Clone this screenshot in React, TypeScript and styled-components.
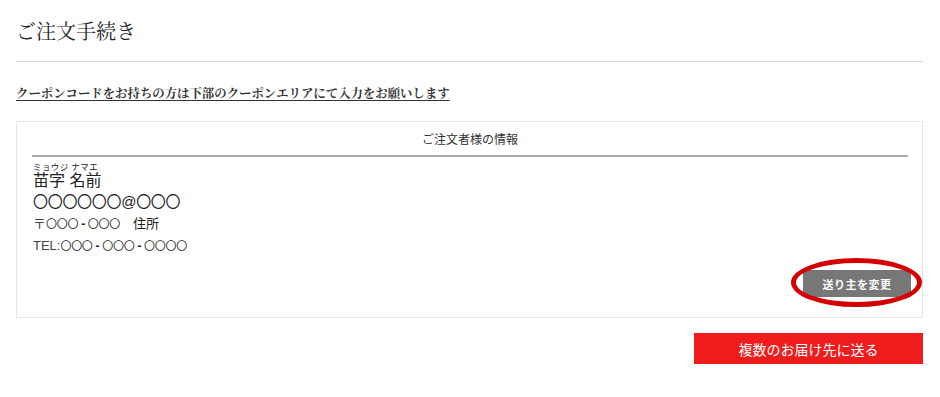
import styled, { createGlobalStyle } from "styled-components";

const GlobalStyle = createGlobalStyle`
  html, body {
    margin: 0;
    padding: 0;
    background: #fff;
  }
  body {
    font-family: "Liberation Sans", "Noto Sans CJK JP", sans-serif;
    color: #222;
  }
`;

const Page = styled.div`
  width: 940px;
  height: 397px;
  box-sizing: border-box;
  padding: 0 17px 0 16px;
`;

const Title = styled.h1`
  margin: 0;
  padding: 16px 0 16px;
  font-family: "Noto Serif CJK JP", "Liberation Serif", "Noto Sans CJK JP", serif;
  font-size: 20px;
  font-weight: 400;
  line-height: 29px;
  color: #222;
  border-bottom: 1px solid #d6d6d6;
`;

const CouponNote = styled.p`
  margin: 22px 0 19px;
  font-family: "Noto Serif CJK JP", "Liberation Serif", "Noto Sans CJK JP", serif;
  font-size: 12.4px;
  font-weight: 700;
  line-height: 18px;
  color: #333;
  text-decoration: underline;
  text-underline-offset: 2px;
`;

const Card = styled.section`
  border: 1px solid #e6e6e6;
  padding: 8px 14px 20px 15px;
`;

const CardHeading = styled.h2`
  margin: 0;
  padding-bottom: 5px;
  text-align: center;
  font-size: 12px;
  font-weight: 400;
  line-height: 20px;
  color: #333;
  border-bottom: 2px solid #aaa;
`;

const Info = styled.div`
  padding: 5px 0 0 1px;
  display: flex;
  flex-direction: column;
`;

const Name = styled.ruby`
  font-size: 16px;
  line-height: 20px;
  ruby-position: over;
  align-self: flex-start;

  rt {
    font-size: 8.5px;
    line-height: 9px;
    letter-spacing: 0.4px;
    text-align: left;
  }
`;

const Line = styled.div<{ $size: number }>`
  font-size: ${(p) => p.$size}px;
  line-height: 21px;
  color: #222;
`;

const Email = styled(Line)`
  letter-spacing: -0.3px;
  line-height: 22px;
`;

const Label = styled.span`
  color: #444;
`;

const Digits = styled.span`
  font-size: 11px;
  letter-spacing: -0.3px;
`;

const Dash = styled.span`
  display: inline-block;
  margin: 0 3px 0 3px;
  font-size: 12px;
  font-weight: 700;
`;

const Actions = styled.div`
  display: flex;
  justify-content: flex-end;
  margin-top: 13px;
`;

const Highlight = styled.div`
  position: relative;
  margin-right: -3px;
`;

const Ring = styled.div`
  position: absolute;
  left: -12px;
  right: -11px;
  top: -12px;
  bottom: -10px;
  border: 5px solid #d40000;
  border-radius: 50%;
  pointer-events: none;
`;

const ChangeButton = styled.button`
  width: 108px;
  height: 27px;
  border: none;
  background: #777;
  color: #fff;
  font-family: inherit;
  font-size: 11px;
  font-weight: 700;
  letter-spacing: 0.5px;
  cursor: pointer;
`;

const Footer = styled.div`
  display: flex;
  justify-content: flex-end;
  margin-top: 15px;
`;

const MultiButton = styled.button`
  width: 229px;
  height: 31px;
  border: none;
  background: #ee1c1c;
  color: #fff;
  font-family: inherit;
  font-size: 14px;
  cursor: pointer;
`;

function Number({ groups }: { groups: number[] }) {
  return (
    <Digits>
      {groups.map((n, i) => (
        <span key={i}>
          {i > 0 && <Dash>-</Dash>}
          {"〇".repeat(n)}
        </span>
      ))}
    </Digits>
  );
}

export default function App() {
  return (
    <>
      <GlobalStyle />
      <Page>
        <Title>ご注文手続き</Title>
        <CouponNote>クーポンコードをお持ちの方は下部のクーポンエリアにて入力をお願いします</CouponNote>
        <Card>
          <CardHeading>ご注文者様の情報</CardHeading>
          <Info>
            <Name>
              苗字 名前<rt>ミョウジ ナマエ</rt>
            </Name>
            <Email $size={15}>〇〇〇〇〇〇@〇〇〇</Email>
            <Line $size={13}>
              <Label>〒</Label>
              <Number groups={[3, 3]} />　住所
            </Line>
            <Line $size={13}>
              <Label>TEL:</Label>
              <Number groups={[3, 3, 4]} />
            </Line>
          </Info>
          <Actions>
            <Highlight>
              <ChangeButton>送り主を変更</ChangeButton>
              <Ring />
            </Highlight>
          </Actions>
        </Card>
        <Footer>
          <MultiButton>複数のお届け先に送る</MultiButton>
        </Footer>
      </Page>
    </>
  );
}
